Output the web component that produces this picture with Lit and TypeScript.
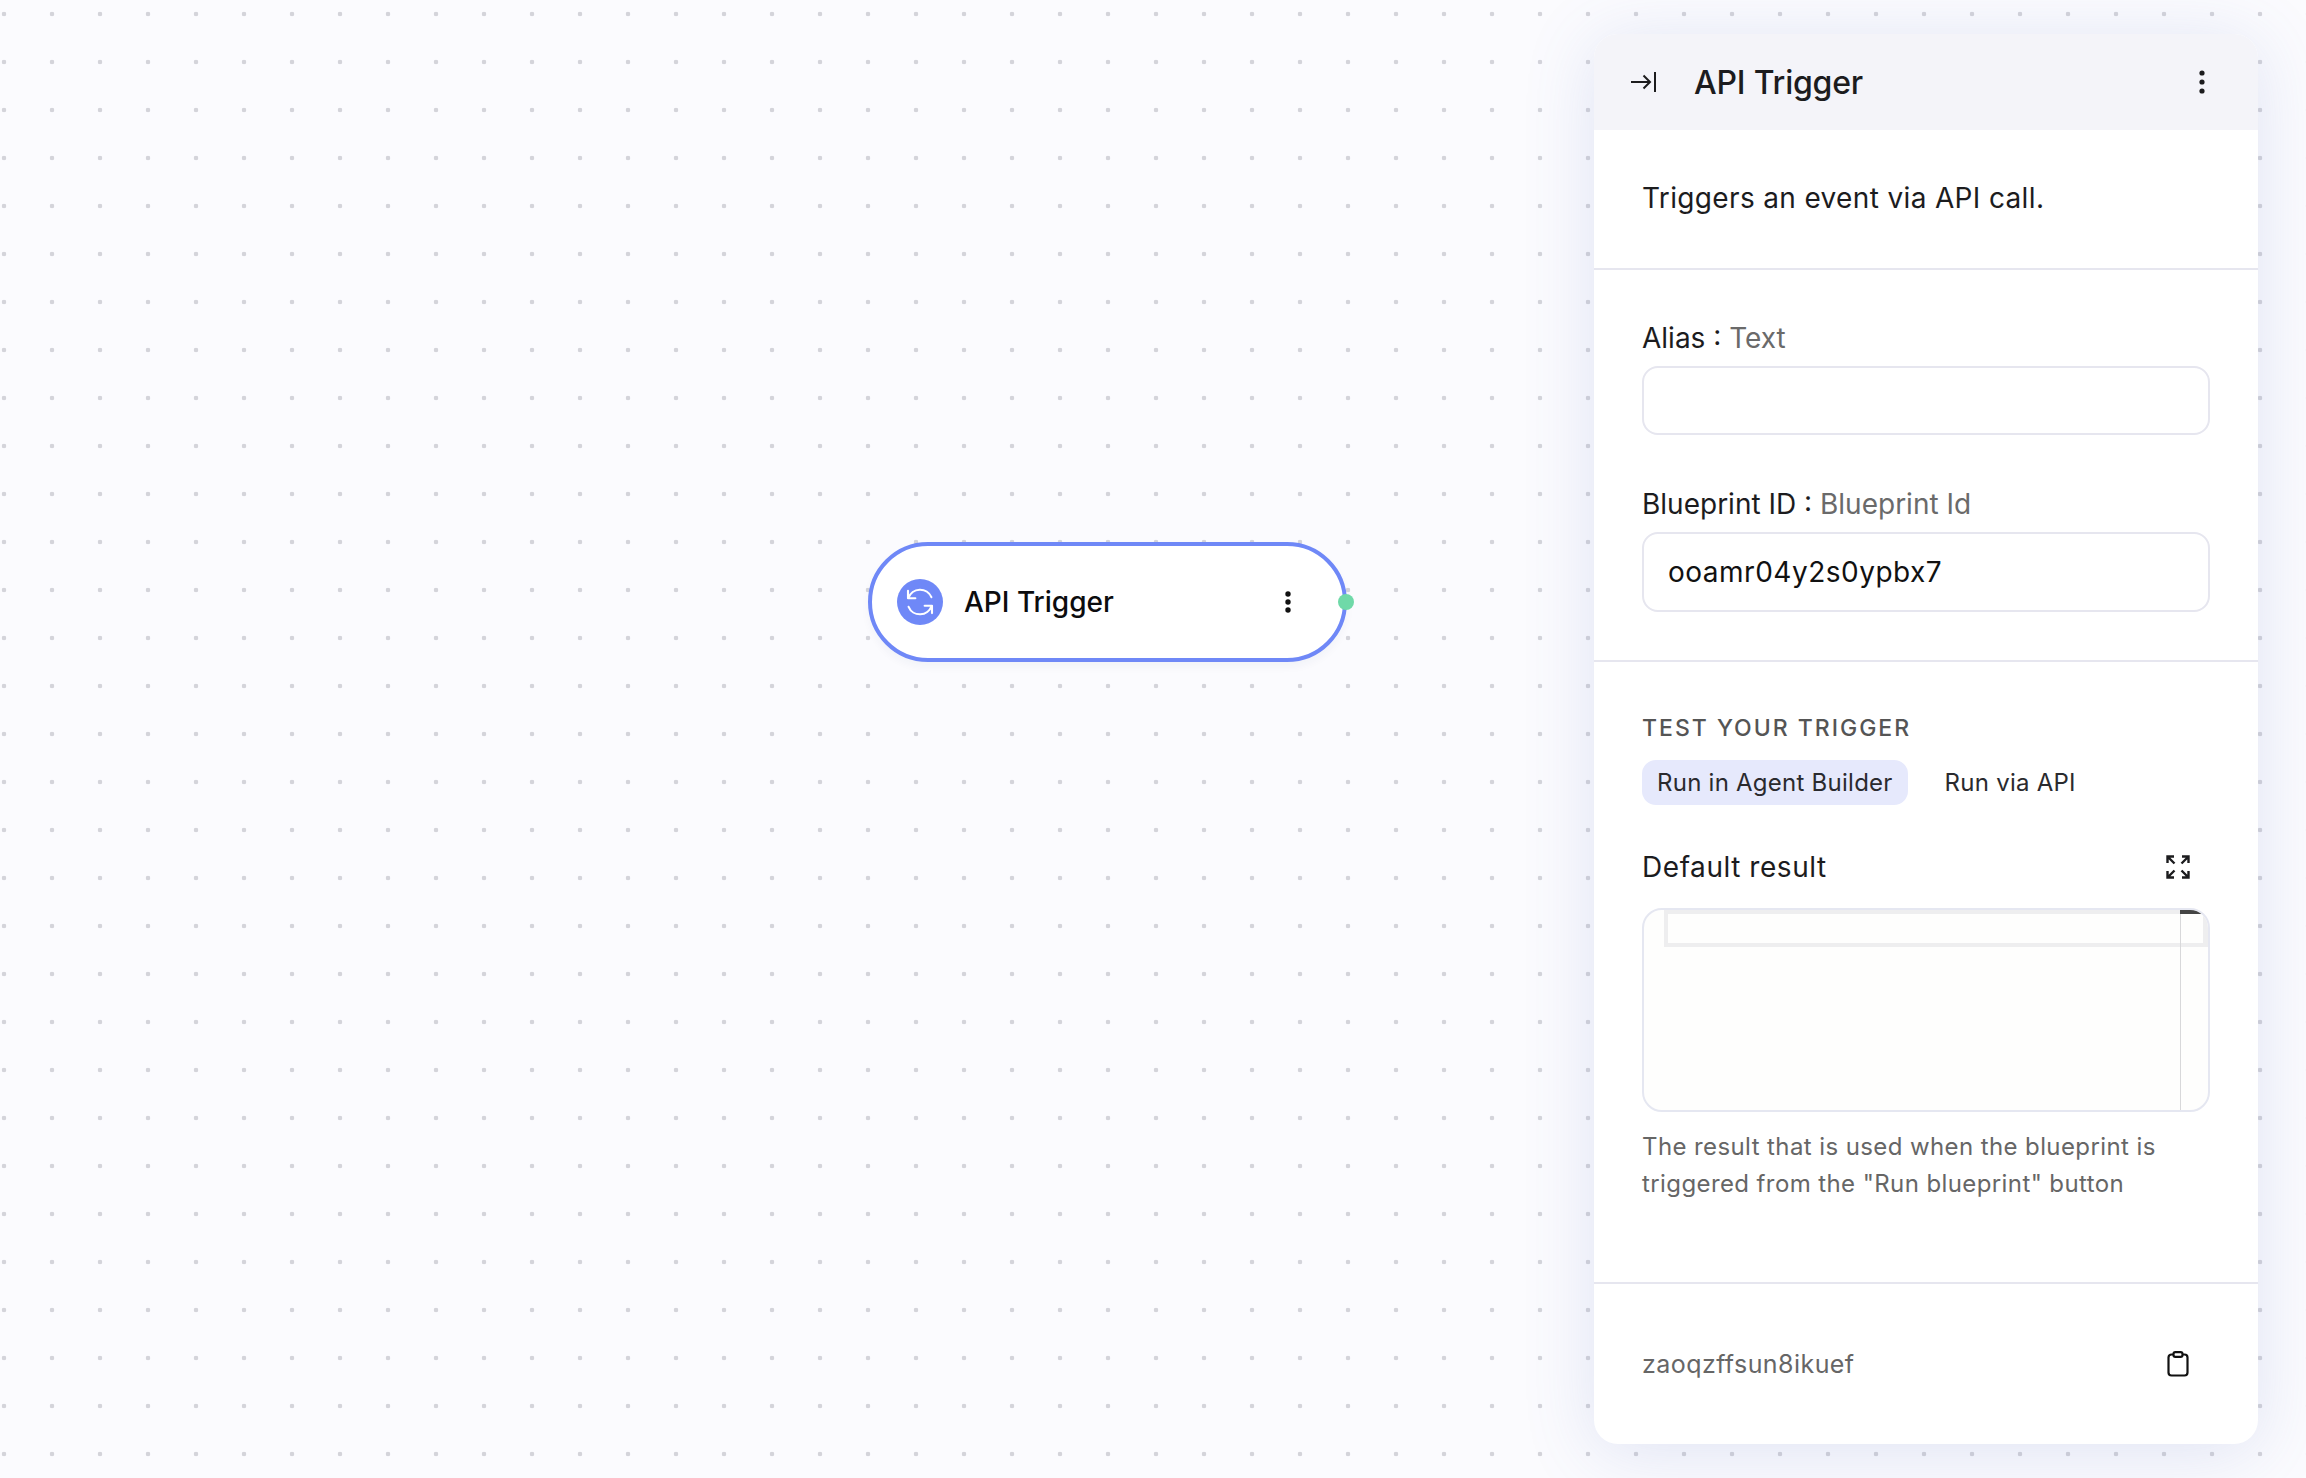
import { LitElement, html, css, svg } from "lit";
import { customElement } from "lit/decorators.js";

const nodeKebab = svg`<circle cx="9" cy="4" r="2.7"/><circle cx="9" cy="12" r="2.7"/><circle cx="9" cy="20" r="2.7"/>`;
const headKebab = svg`<circle cx="9" cy="3" r="2.6"/><circle cx="9" cy="12" r="2.6"/><circle cx="9" cy="21" r="2.6"/>`;

@customElement("app-root")
export class AppRoot extends LitElement {
  static styles = css`
    :host {
      display: block;
      font-family: Inter, "Open Sans", sans-serif;
      color: #1c1c1e;
    }
    .canvas {
      position: relative;
      box-sizing: border-box;
      height: 1478px;
      overflow: hidden;
      display: flex;
      justify-content: flex-end;
      padding: 34px 48px 34px 0;
      background-color: #fbfbfe;
      background-image: radial-gradient(circle at 4px 14px, #d4d4da 2px, transparent 2.6px);
      background-size: 48px 48px;
    }
    .node {
      position: absolute;
      left: 868px;
      top: 542px;
      box-sizing: border-box;
      width: 479px;
      height: 120px;
      border: 4px solid #6f88f7;
      border-radius: 60px;
      background: #fff;
      box-shadow: 0 5px 8px rgba(30, 40, 90, 0.04);
      display: flex;
      align-items: center;
      padding: 0 22px 0 25px;
    }
    .node-icon {
      width: 46px;
      height: 46px;
      flex: none;
      border-radius: 50%;
      background: #6f88f7;
      display: flex;
      align-items: center;
      justify-content: center;
    }
    .node-title {
      flex: 1;
      margin-left: 21px;
      font-size: 28px;
      font-weight: 500;
      letter-spacing: 0;
      color: #0c0c0e;
    }
    .node-kebab {
      width: 18px;
      height: 24px;
      margin-right: 24px;
      fill: #111;
    }
    .port {
      position: absolute;
      right: -11px;
      top: 48px;
      width: 16px;
      height: 16px;
      border-radius: 50%;
      background: #6fd9a8;
    }
    .panel {
      width: 664px;
      box-sizing: border-box;
      border-radius: 24px;
      background: #fff;
      box-shadow: 0 8px 70px rgba(90, 110, 190, 0.17);
      display: flex;
      flex-direction: column;
      overflow: hidden;
      position: relative;
    }
    .head {
      height: 96px;
      flex: none;
      background: #f4f4f9;
      display: flex;
      align-items: center;
      padding: 0 47px 0 37px;
    }
    .head-title {
      flex: 1;
      margin-left: 38px;
      font-size: 32px;
      font-weight: 500;
      letter-spacing: -0.2px;
    }
    .kebab {
      width: 18px;
      height: 24px;
      fill: #1c1c1e;
    }
    .desc {
      height: 140px;
      flex: none;
      box-sizing: border-box;
      border-bottom: 2px solid #e6e6ef;
      display: flex;
      align-items: center;
      padding: 0 48px 3px 48px;
      font-size: 28px;
      letter-spacing: 0.35px;
    }
    .fields {
      flex: none;
      box-sizing: border-box;
      height: 392px;
      padding: 48px 48px 0 48px;
      border-bottom: 2px solid #e6e6ef;
    }
    .label {
      font-size: 28px;
      line-height: 40px;
      letter-spacing: 0;
      margin-bottom: 8px;
    }
    .label span {
      color: #6a6a6a;
    }
    .input {
      box-sizing: border-box;
      border: 2px solid #e6e6ef;
      border-radius: 16px;
      height: 69px;
      margin-bottom: 49px;
    }
    .input.filled {
      height: 80px;
      margin-bottom: 0;
      display: flex;
      align-items: center;
      padding-left: 24px;
      font-size: 28px;
      letter-spacing: 0.5px;
      color: #111;
    }
    .test {
      flex: 1;
      box-sizing: border-box;
      padding: 48px 48px 0 48px;
      border-bottom: 2px solid #e6e6ef;
      display: flex;
      flex-direction: column;
    }
    .test-title {
      font-size: 23px;
      line-height: 36px;
      letter-spacing: 2px;
      color: #555;
      font-weight: 500;
    }
    .tabs {
      display: flex;
      align-items: center;
      margin-top: 14px;
      gap: 37px;
      font-size: 24px;
      letter-spacing: 0.25px;
      color: #2a2a2e;
    }
    .tab {
      height: 45px;
      display: flex;
      align-items: center;
    }
    .tab.active {
      background: #e6e9fc;
      border-radius: 14px;
      padding: 0 15px;
    }
    .row {
      display: flex;
      align-items: center;
      justify-content: space-between;
      padding-right: 20px;
    }
    .result-row {
      margin-top: 42px;
      height: 40px;
      font-size: 28px;
      letter-spacing: 0.55px;
    }
    .editor {
      position: relative;
      margin-top: 21px;
      height: 204px;
      box-sizing: border-box;
      border: 2px solid #e5e7f1;
      border-radius: 20px;
      background: #fefefd;
      overflow: hidden;
      display: flex;
      flex-direction: column;
    }
    .line {
      box-sizing: border-box;
      margin-left: 20px;
      height: 37px;
      border-style: solid;
      border-color: #eeeeef;
      border-width: 4px 5px 4px 4px;
    }
    .scroll {
      position: absolute;
      right: 27px;
      top: 0;
      bottom: 0;
      width: 1px;
      background: #d8d8da;
    }
    .thumb {
      position: absolute;
      left: 0;
      top: 0;
      width: 22px;
      height: 4px;
      background: #444;
    }
    .help {
      margin-top: 16px;
      font-size: 24px;
      line-height: 37px;
      letter-spacing: 0.4px;
      color: #666;
    }
    .foot {
      flex: none;
      height: 160px;
      font-size: 25px;
      color: #666;
      letter-spacing: 0.44px;
      padding: 0 69px 0 48px;
      display: flex;
      align-items: center;
      justify-content: space-between;
    }
    svg {
      display: block;
      flex: none;
    }
  `;

  render() {
    return html`
      <div class="canvas">
        <div class="node">
          <div class="node-icon">
            <svg width="36" height="36" viewBox="0 0 24 24" fill="none" stroke="#fff" stroke-width="1.4" stroke-linecap="round" stroke-linejoin="round">
              <path d="M4 4.6v4.9h4.9" />
              <path d="M20 19.4v-4.9h-4.9" />
              <path d="M4.3 9.3A8.2 8.2 0 0 1 19.6 8.8" />
              <path d="M19.7 14.7A8.2 8.2 0 0 1 4.4 15.2" />
            </svg>
          </div>
          <div class="node-title">API Trigger</div>
          <svg class="node-kebab" viewBox="0 0 18 24">${nodeKebab}</svg>
          <div class="port"></div>
        </div>

        <aside class="panel">
          <header class="head">
            <svg width="25" height="20" viewBox="0 0 25 20" fill="none" stroke="#1c1c1e" stroke-width="2">
              <path d="M0 10h19M12.5 3.5l6.5 6.5-6.5 6.5" />
              <path d="M24 0v20" />
            </svg>
            <div class="head-title">API Trigger</div>
            <svg class="kebab" viewBox="0 0 18 24">${headKebab}</svg>
          </header>

          <div class="desc">Triggers an event via API call.</div>

          <section class="fields">
            <div class="label">Alias : <span>Text</span></div>
            <div class="input"></div>
            <div class="label">Blueprint ID : <span>Blueprint Id</span></div>
            <div class="input filled">ooamr04y2s0ypbx7</div>
          </section>

          <section class="test">
            <div class="test-title">TEST YOUR TRIGGER</div>
            <div class="tabs">
              <div class="tab active">Run in Agent Builder</div>
              <div class="tab">Run via API</div>
            </div>
            <div class="row result-row">
              <span>Default result</span>
              <svg width="24" height="24" viewBox="0 0 24 24" fill="none" stroke="#1c1c1e" stroke-width="2.4">
                <path d="M1.5 8V1.5H8M1.5 1.5l7 7" />
                <path d="M16 1.5h6.5V8M22.5 1.5l-7 7" />
                <path d="M1.5 16v6.5H8M1.5 22.5l7-7" />
                <path d="M16 22.5h6.5V16M22.5 22.5l-7-7" />
              </svg>
            </div>
            <div class="editor">
              <div class="line"></div>
              <div class="scroll"><div class="thumb"></div></div>
            </div>
            <div class="help">The result that is used when the blueprint is<br />triggered from the "Run blueprint" button</div>
          </section>

          <footer class="foot">
            <span>zaoqzffsun8ikuef</span>
            <svg width="22" height="26" viewBox="0 0 22 26" fill="none" stroke="#111" stroke-width="2.2" stroke-linejoin="round">
              <rect x="1.5" y="3.5" width="19" height="21" rx="3" />
              <rect x="6.5" y="1.2" width="9" height="4.6" rx="1.8" fill="#fff" />
            </svg>
          </footer>
        </aside>
      </div>
    `;
  }
}
